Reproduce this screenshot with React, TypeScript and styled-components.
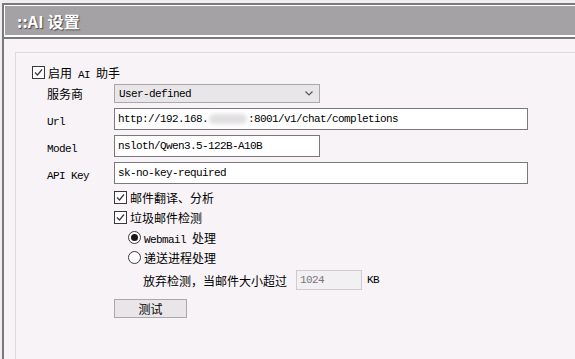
import styled, { createGlobalStyle } from 'styled-components'

const GlobalStyle = createGlobalStyle`
  html, body {
    margin: 0;
    padding: 0;
    background: #efedef;
  }
  body {
    font-family: "Noto Sans CJK SC", "Liberation Sans", sans-serif;
    font-size: 12px;
    color: #000;
  }
`

const Frame = styled.div`
  margin: 3px 0 0 2px;
  height: calc(100vh - 3px);
  box-sizing: border-box;
  border-top: 2px solid #7b797b;
  border-left: 2px solid #7b797b;
  background: #f7f3f7;
  display: flex;
  flex-direction: column;
`

const HeaderWrap = styled.div`
  padding: 1px 0 2px 1px;
  background: #ffffff;
  border-bottom: 2px solid #7b797b;
`

const Title = styled.div`
  height: 29px;
  background: #a5a2a5;
  display: flex;
  align-items: center;
  padding-left: 12px;
  color: #ffffff;
  font-size: 16px;
  font-weight: 700;
  text-shadow: 1px 1px 1px #4a484a;
  letter-spacing: 0.2px;
`

const Body = styled.div`
  flex: 1;
  padding: 13px 0 0 11px;
  display: flex;
`

const Fieldset = styled.div`
  flex: 1;
  border-top: 1px solid #dcdadc;
  border-left: 1px solid #dcdadc;
  padding: 13px 0 0 16px;
  display: flex;
  flex-direction: column;
`

const Mono = styled.span`
  font-family: "Liberation Mono", "DejaVu Sans Mono", monospace;
  font-size: 11px;
  letter-spacing: -0.6px;
  white-space: pre;
`

const CheckRow = styled.div<{ indent?: number }>`
  display: flex;
  align-items: center;
  height: 13px;
  margin-left: ${({ indent }) => indent ?? 0}px;
  gap: 3px;
  white-space: nowrap;
`

const Box = styled.span`
  width: 13px;
  height: 13px;
  box-sizing: border-box;
  border: 1px solid #3a383a;
  background: #ffffff;
  display: inline-flex;
  align-items: center;
  justify-content: center;
  flex: none;
`

const Radio = styled.span<{ checked?: boolean }>`
  width: 13px;
  height: 13px;
  box-sizing: border-box;
  border: 1px solid #3a383a;
  border-radius: 50%;
  background: #ffffff;
  display: inline-flex;
  align-items: center;
  justify-content: center;
  flex: none;
  &::after {
    content: '';
    width: 7px;
    height: 7px;
    border-radius: 50%;
    background: ${({ checked }) => (checked ? '#1a181a' : 'transparent')};
  }
`

const FormGrid = styled.div`
  display: grid;
  grid-template-columns: 67px auto;
  justify-content: start;
  row-gap: 5px;
  margin: 5px 0 0 15px;
  align-items: center;
`

const Label = styled.div`
  white-space: nowrap;
`

const Select = styled.div`
  width: 206px;
  height: 19px;
  box-sizing: border-box;
  border: 1px solid #aaa8aa;
  background: #e9e6e9;
  display: flex;
  align-items: center;
  justify-content: space-between;
  padding: 0 6px 0 4px;
  font-family: "Liberation Mono", "DejaVu Sans Mono", monospace;
  font-size: 11px;
  letter-spacing: -0.6px;
`

const Field = styled.div<{ width: number; disabled?: boolean }>`
  width: ${({ width }) => width}px;
  height: ${({ disabled }) => (disabled ? 20 : 22)}px;
  box-sizing: border-box;
  border: 1px solid ${({ disabled }) => (disabled ? '#cfcccf' : '#7b797b')};
  background: ${({ disabled }) => (disabled ? '#f3f0f3' : '#ffffff')};
  color: ${({ disabled }) => (disabled ? '#777577' : '#000')};
  display: flex;
  align-items: center;
  padding-left: 3px;
  font-family: "Liberation Mono", "DejaVu Sans Mono", monospace;
  font-size: 11px;
  letter-spacing: -0.6px;
  white-space: nowrap;
  overflow: hidden;
`

const Blur = styled.span`
  display: inline-block;
  width: 38px;
  height: 10px;
  margin: 0 1px;
  border-radius: 5px;
  background: #e0dee0;
  filter: blur(2px);
`

const Options = styled.div`
  display: flex;
  flex-direction: column;
  gap: 7px;
  margin: 7px 0 0 82px;
`

const SizeRow = styled.div`
  display: flex;
  align-items: center;
  margin: -1px 0 0 29px;
  white-space: nowrap;
`

const SizeText = styled.span`
  margin-right: 9px;
`

const Unit = styled(Mono)`
  margin-left: 5px;
`

const Button = styled.div`
  width: 73px;
  height: 19px;
  box-sizing: border-box;
  border: 1px solid #aaa8aa;
  background: #e9e5e9;
  display: flex;
  align-items: center;
  justify-content: center;
  margin-top: 2px;
`

const Check = () => (
  <Box>
    <svg width="11" height="11" viewBox="0 0 11 11">
      <polyline points="2,5.5 4.5,8 9,2.5" fill="none" stroke="#3a383a" strokeWidth="1.2" />
    </svg>
  </Box>
)

export default function App() {
  return (
    <>
      <GlobalStyle />
      <Frame>
        <HeaderWrap>
          <Title>::AI 设置</Title>
        </HeaderWrap>
        <Body>
          <Fieldset>
            <CheckRow>
              <Check />
              <span>
                启用<Mono> AI </Mono>助手
              </span>
            </CheckRow>
            <FormGrid>
              <Label>服务商</Label>
              <Select>
                <span>User-defined</span>
                <svg width="8" height="5" viewBox="0 0 8 5">
                  <polyline points="0.5,0.5 4,4 7.5,0.5" fill="none" stroke="#555355" strokeWidth="1.1" />
                </svg>
              </Select>
              <Label>
                <Mono>Url</Mono>
              </Label>
              <Field width={414}>
                http://192.168.<Blur />:8001/v1/chat/completions
              </Field>
              <Label>
                <Mono>Model</Mono>
              </Label>
              <Field width={206}>nsloth/Qwen3.5-122B-A10B</Field>
              <Label>
                <Mono>API Key</Mono>
              </Label>
              <Field width={414}>sk-no-key-required</Field>
            </FormGrid>
            <Options>
              <CheckRow>
                <Check />
                <span>邮件翻译、分析</span>
              </CheckRow>
              <CheckRow>
                <Check />
                <span>垃圾邮件检测</span>
              </CheckRow>
              <CheckRow indent={14}>
                <Radio checked />
                <span>
                  <Mono>Webmail </Mono>处理
                </span>
              </CheckRow>
              <CheckRow indent={14}>
                <Radio />
                <span>递送进程处理</span>
              </CheckRow>
              <SizeRow>
                <SizeText>放弃检测，当邮件大小超过</SizeText>
                <Field width={66} disabled>
                  1024
                </Field>
                <Unit>KB</Unit>
              </SizeRow>
              <Button>测试</Button>
            </Options>
          </Fieldset>
        </Body>
      </Frame>
    </>
  )
}
